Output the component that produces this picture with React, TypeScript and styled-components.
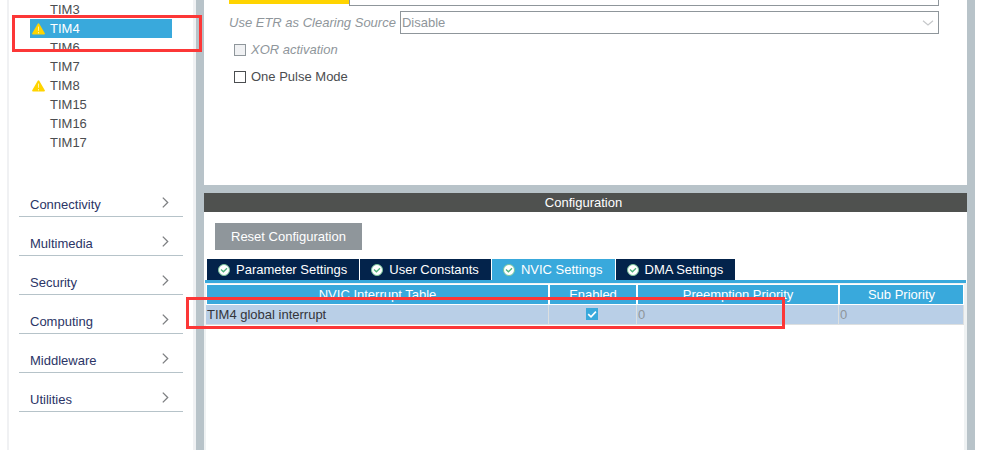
import React from "react";
import styled, { createGlobalStyle } from "styled-components";

const GlobalStyle = createGlobalStyle`
  *, *::before, *::after { box-sizing: border-box; }
  body {
    margin: 0;
    background: #fff;
    color: #4b4d50;
    font: 13px/19px "Liberation Sans", Arial, sans-serif;
  }
  button, input, select { font: inherit; color: inherit; margin: 0; }
`;

const Page = styled.div`
  position: relative;
  display: flex;
  min-height: 100vh;
  padding-left: 7px;
  padding-right: 25px;
`;

const Sidebar = styled.nav`
  flex: 0 0 189px;
  border-left: 2px solid #f0f1f3;
  border-right: 3px solid #f0f1f3;
`;

const TimerList = styled.ul`
  list-style: none;
  margin: 0 21px 26px;
  padding: 0;
`;

const TimerItem = styled.button<{ $selected?: boolean }>`
  display: grid;
  grid-template-columns: 16px 1fr;
  column-gap: 4px;
  align-items: center;
  width: 100%;
  height: 19px;
  padding: 0;
  border: 0;
  text-align: left;
  background: ${(p) => (p.$selected ? "#39a9dc" : "transparent")};
  color: ${(p) => (p.$selected ? "#fff" : "#4b4d50")};
`;

const IconSlot = styled.span`
  display: flex;
  justify-content: center;
`;

const Category = styled.button`
  display: flex;
  justify-content: space-between;
  align-items: center;
  width: calc(100% - 20px);
  height: 39px;
  margin: 0 10px;
  padding: 15px 14px 0 11px;
  border: 0;
  border-bottom: 1px solid #b6c3c9;
  background: none;
  color: #2b3566;

  svg { margin-bottom: 4px; }
`;

const Workspace = styled.main`
  flex: 1;
  min-width: 0;
  display: flex;
  flex-direction: column;
  border: solid #b8c3c9;
  border-width: 0 8px;
`;

const ModePanel = styled.section`
  height: 193px;
  padding: 0 28px 0 25px;
  border-bottom: 8px solid #b8c3c9;
`;

const ChannelRow = styled.div`
  display: flex;
  align-items: flex-start;
  height: 6px;
  margin-bottom: 5px;
`;

const ChannelMark = styled.div`
  width: 120px;
  height: 4px;
  background: #ffd400;
`;

const ChannelField = styled.div`
  flex: 1;
  height: 6px;
  border: 1px solid #8f969b;
  border-top: 0;
`;

const SourceRow = styled.div`
  display: flex;
  align-items: center;
  gap: 4px;
  color: #8f969b;

  label { font-style: italic; white-space: nowrap; }
`;

const SelectBox = styled.div`
  flex: 1;
  display: grid;
  align-items: center;

  > * { grid-area: 1 / 1; }
  svg { justify-self: end; margin-right: 5px; pointer-events: none; }
`;

const Select = styled.select`
  appearance: none;
  width: 100%;
  height: 23px;
  padding: 0 1px;
  border: 1px solid #8f969b;
  border-radius: 0;
  background: #fff;
  opacity: 1;
`;

const OptionRow = styled.label<{ $muted?: boolean }>`
  display: flex;
  align-items: center;
  gap: 5px;
  height: 19px;
  margin: 6px 0 8px 5px;
  color: ${(p) => (p.$muted ? "#8f969b" : "#4b4d50")};
  font-style: ${(p) => (p.$muted ? "italic" : "normal")};
`;

const CheckBox = styled.input`
  appearance: none;
  width: 12px;
  height: 12px;
  border: 1px solid #4b4d50;
  background: #fff;

  &:disabled { border-color: #8f969b; background: #f0f1f3; }
  &:checked { border-color: #39a9dc; background: #39a9dc; }
`;

const CheckCell = styled.span`
  display: grid;
  place-content: center;
  place-items: center;
  padding: 0 1px 1px 0;

  > * { grid-area: 1 / 1; }
  svg { pointer-events: none; }
`;

const ConfigPanel = styled.section`
  flex: 1;
  display: flex;
  flex-direction: column;
`;

const PanelTitle = styled.h2`
  margin: 0;
  padding-right: 4px;
  background: #4f514f;
  color: #fff;
  font-size: 13px;
  font-weight: 400;
  line-height: 19px;
  text-align: center;
`;

const ResetButton = styled.button`
  align-self: flex-start;
  height: 27px;
  margin: 11px 11px 9px;
  padding: 0 16px;
  border: 0;
  background: #8f969b;
  color: #fff;
`;

const Tabs = styled.div`
  display: flex;
  gap: 1px;
  margin: 0 1px;
  padding-left: 2px;
  border-bottom: 3px solid #39a9dc;
`;

const Tab = styled.button<{ $active?: boolean }>`
  display: flex;
  align-items: center;
  gap: 6px;
  height: 21px;
  padding: 0 12px 0 11px;
  border: 0;
  white-space: nowrap;
  background: ${(p) => (p.$active ? "#39a9dc" : "#03234b")};
  color: #fff;
`;

const TableFrame = styled.div`
  flex: 1;
  border: solid #eff2f3;
  border-width: 1px 3px 0 2px;
  padding-top: 1px;
`;

const InterruptTable = styled.table`
  width: 100%;
  table-layout: fixed;
  border-collapse: separate;
  border-spacing: 0;

  th, td { height: 20px; padding: 0 1px; }
  th {
    border: solid #fff;
    border-width: 0 1px 1px;
    background: #39a9dc;
    color: #fff;
    font-weight: 400;
  }
  td {
    border: solid #dcdfe0;
    border-width: 0 1px 1px 0;
    background: #b9cfe7;
    color: #33343a;
  }
`;

const Col = styled.col<{ $width?: number }>`
  width: ${(p) => (p.$width ? `${p.$width}px` : "auto")};
`;

const Muted = styled.span`
  color: #8f969b;
`;

const Highlight = styled.div<{ $x: number; $y: number; $w: number; $h: number }>`
  position: absolute;
  left: ${(p) => p.$x}px;
  top: ${(p) => p.$y}px;
  width: ${(p) => p.$w}px;
  height: ${(p) => p.$h}px;
  border: 3px solid #fc3737;
  pointer-events: none;
`;

const WarningIcon = () => (
  <svg width="13" height="12" viewBox="0 0 13 12" aria-hidden="true">
    <path d="M6.5 1.3 L12 10.6 H1 Z" fill="#ffd400" stroke="#ffd400" strokeWidth="1.8" strokeLinejoin="round" />
    <path d="M6.5 3.6 V7.8 M6.5 9 V10.4" stroke="#fff3b0" strokeWidth="1" />
  </svg>
);

const ChevronRight = () => (
  <svg width="7" height="11" viewBox="0 0 7 11" fill="none" aria-hidden="true">
    <path d="M0.8 0.6 L5.7 5.5 L0.8 10.4" stroke="#7d7f82" strokeWidth="1.3" />
  </svg>
);

const ChevronDown = () => (
  <svg width="12" height="6" viewBox="0 0 12 6" fill="none" aria-hidden="true">
    <path d="M1 0.7 L6 5 L11 0.7" stroke="#c6c8ca" strokeWidth="1.2" />
  </svg>
);

const TabCheck = () => (
  <svg width="12" height="12" viewBox="0 0 12 12" fill="none" aria-hidden="true">
    <circle cx="6" cy="6" r="5.5" fill="#fff" stroke="#7cc79c" strokeWidth="1" />
    <path d="M3 5.6 L5.4 7.8 L9 4.2" stroke="#4fb37b" strokeWidth="1.3" />
  </svg>
);

const Tick = () => (
  <svg width="12" height="12" viewBox="0 0 12 12" fill="none" aria-hidden="true">
    <path d="M2.2 6.2 L5 8.8 L9.9 3.6" stroke="#fff" strokeWidth="1.6" />
  </svg>
);

const timers = [
  { name: "TIM3" },
  { name: "TIM4", warning: true, selected: true },
  { name: "TIM6" },
  { name: "TIM7" },
  { name: "TIM8", warning: true },
  { name: "TIM15" },
  { name: "TIM16" },
  { name: "TIM17" },
];

const categories = ["Connectivity", "Multimedia", "Security", "Computing", "Middleware", "Utilities"];
const tabs = ["Parameter Settings", "User Constants", "NVIC Settings", "DMA Settings"];

export default function App() {
  return (
    <>
      <GlobalStyle />
      <Page>
        <Sidebar>
          <TimerList>
            {timers.map((t) => (
              <li key={t.name}>
                <TimerItem type="button" $selected={t.selected}>
                  <IconSlot>{t.warning && <WarningIcon />}</IconSlot>
                  {t.name}
                </TimerItem>
              </li>
            ))}
          </TimerList>
          {categories.map((c) => (
            <Category type="button" key={c}>
              {c}
              <ChevronRight />
            </Category>
          ))}
        </Sidebar>

        <Workspace>
          <ModePanel>
            <ChannelRow>
              <ChannelMark />
              <ChannelField />
            </ChannelRow>
            <SourceRow>
              <label htmlFor="clearing">Use ETR as Clearing Source</label>
              <SelectBox>
                <Select id="clearing" disabled defaultValue="Disable">
                  <option>Disable</option>
                </Select>
                <ChevronDown />
              </SelectBox>
            </SourceRow>
            <OptionRow $muted>
              <CheckBox type="checkbox" disabled />
              XOR activation
            </OptionRow>
            <OptionRow>
              <CheckBox type="checkbox" />
              One Pulse Mode
            </OptionRow>
          </ModePanel>

          <ConfigPanel>
            <PanelTitle>Configuration</PanelTitle>
            <ResetButton type="button">Reset Configuration</ResetButton>
            <Tabs role="tablist">
              {tabs.map((t) => (
                <Tab type="button" role="tab" key={t} $active={t === "NVIC Settings"} aria-selected={t === "NVIC Settings"}>
                  <TabCheck />
                  {t}
                </Tab>
              ))}
            </Tabs>
            <TableFrame>
              <InterruptTable>
                <colgroup>
                  <Col $width={343} />
                  <Col $width={88} />
                  <Col $width={202} />
                  <Col />
                </colgroup>
                <thead>
                  <tr>
                    <th scope="col">NVIC Interrupt Table</th>
                    <th scope="col">Enabled</th>
                    <th scope="col">Preemption Priority</th>
                    <th scope="col">Sub Priority</th>
                  </tr>
                </thead>
                <tbody>
                  <tr>
                    <td>TIM4 global interrupt</td>
                    <td>
                      <CheckCell>
                        <CheckBox type="checkbox" defaultChecked aria-label="Enable TIM4 global interrupt" />
                        <Tick />
                      </CheckCell>
                    </td>
                    <td><Muted>0</Muted></td>
                    <td><Muted>0</Muted></td>
                  </tr>
                </tbody>
              </InterruptTable>
            </TableFrame>
          </ConfigPanel>
        </Workspace>

        <Highlight $x={12} $y={15} $w={190} $h={37} />
        <Highlight $x={186} $y={297} $w={599} $h={32} />
      </Page>
    </>
  );
}
